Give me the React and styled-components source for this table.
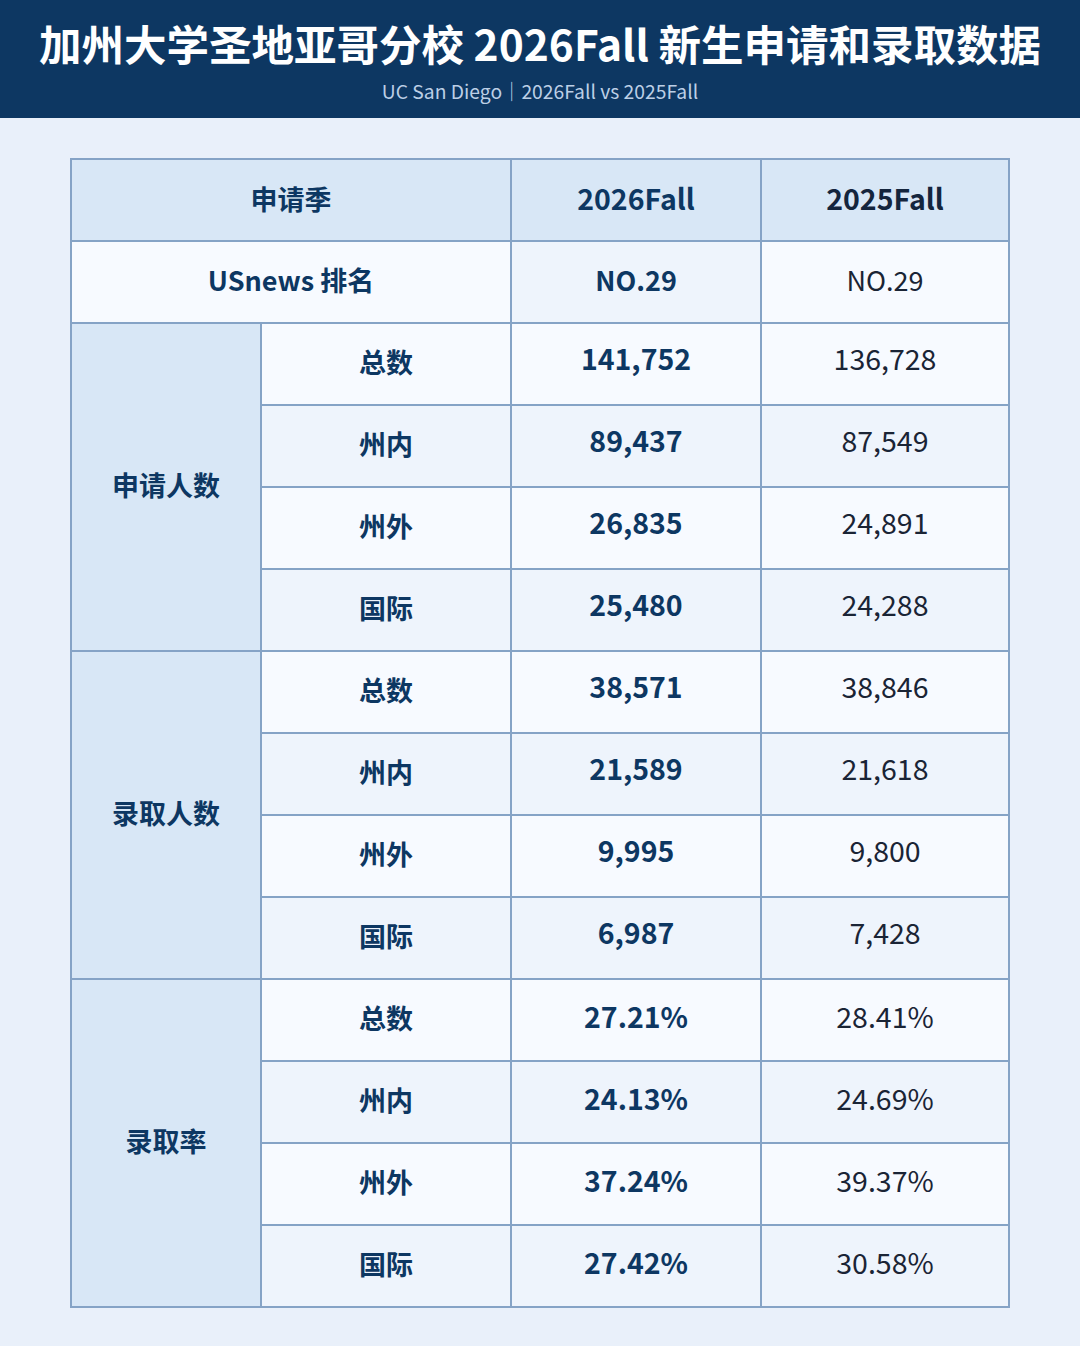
import React from "react";
import styled, { createGlobalStyle } from "styled-components";

const GlobalStyle = createGlobalStyle`
  html, body {
    margin: 0;
    padding: 0;
    background: #e9f0fa;
    font-family: "Noto Sans CJK SC", "Noto Sans", sans-serif;
  }
`;

const Page = styled.div`
  width: 1080px;
  min-height: 1346px;
  background: #e9f0fa;
  display: flex;
  flex-direction: column;
  align-items: center;
`;

const Header = styled.header`
  width: 100%;
  height: 118px;
  background: #0d3762;
  display: flex;
  flex-direction: column;
  align-items: center;
  box-sizing: border-box;
  padding-top: 12px;
`;

const Title = styled.h1`
  margin: 0;
  color: #ffffff;
  font-size: 42.5px;
  font-weight: 700;
  line-height: 62px;
  white-space: nowrap;
`;

const Subtitle = styled.div`
  color: #bccfe6;
  font-size: 19.3px;
  font-weight: 400;
  line-height: 26px;
  margin-top: 4px;
`;

const Table = styled.div`
  margin-top: 40px;
  display: grid;
  grid-template-columns: 188px 248px 248px 246px;
  grid-auto-rows: 80px;
  gap: 2px;
  padding: 2px;
  background: #85a3c6;
`;

const bgs = {
  head: "#d8e7f6",
  white: "#f7faff",
  light: "#eef4fc",
};

// bottom padding nudges each kind of text to the reference's baseline
const pads = {
  label: "5px",
  head: "3px",
  num: "11px",
  pct: "7px",
};

const Cell = styled.div`
  display: flex;
  align-items: center;
  justify-content: center;
  box-sizing: border-box;
  background: ${(p) => bgs[p.$bg || "white"]};
  grid-column: ${(p) => (p.$span ? `span ${p.$span}` : "auto")};
  grid-row: ${(p) => (p.$rows ? `span ${p.$rows}` : "auto")};
  font-size: ${(p) => (p.$big ? "28.5px" : "27px")};
  font-weight: ${(p) => (p.$plain ? 400 : 700)};
  color: ${(p) => (p.$plain ? "#1a2435" : p.$dark ? "#14253d" : "#0d3762")};
  line-height: 1;
  padding-bottom: ${(p) => pads[p.$kind || "label"]};
`;

const groups = [
  {
    name: "申请人数",
    rows: [
      ["总数", "141,752", "136,728"],
      ["州内", "89,437", "87,549"],
      ["州外", "26,835", "24,891"],
      ["国际", "25,480", "24,288"],
    ],
  },
  {
    name: "录取人数",
    rows: [
      ["总数", "38,571", "38,846"],
      ["州内", "21,589", "21,618"],
      ["州外", "9,995", "9,800"],
      ["国际", "6,987", "7,428"],
    ],
  },
  {
    name: "录取率",
    rows: [
      ["总数", "27.21%", "28.41%"],
      ["州内", "24.13%", "24.69%"],
      ["州外", "37.24%", "39.37%"],
      ["国际", "27.42%", "30.58%"],
    ],
  },
];

const App = () => {
  return (
    <Page>
      <GlobalStyle />
      <Header>
        <Title>加州大学圣地亚哥分校 2026Fall 新生申请和录取数据</Title>
        <Subtitle>UC San Diego｜2026Fall vs 2025Fall</Subtitle>
      </Header>

      <Table>
        <Cell $bg="head" $span={2} $kind="head">申请季</Cell>
        <Cell $bg="head" $kind="head" $big>2026Fall</Cell>
        <Cell $bg="head" $kind="head" $big $dark>2025Fall</Cell>

        <Cell $bg="white" $span={2}>USnews 排名</Cell>
        <Cell $bg="light">NO.29</Cell>
        <Cell $bg="white" $plain>NO.29</Cell>

        {groups.map((g) => (
          <React.Fragment key={g.name}>
            <Cell $bg="head" $rows={4}>{g.name}</Cell>
            {g.rows.map(([label, a, b], i) => {
              const bg = i % 2 === 0 ? "white" : "light";
              const kind = a.endsWith("%") ? "pct" : "num";
              return (
                <React.Fragment key={label}>
                  <Cell $bg={bg}>{label}</Cell>
                  <Cell $bg={bg} $kind={kind} $big>{a}</Cell>
                  <Cell $bg={bg} $kind={kind} $big $plain>{b}</Cell>
                </React.Fragment>
              );
            })}
          </React.Fragment>
        ))}
      </Table>
    </Page>
  );
};

export default App;
